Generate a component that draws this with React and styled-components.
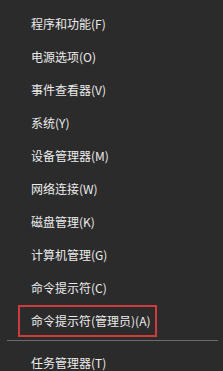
import React from "react";
import styled, { createGlobalStyle } from "styled-components";

const GlobalStyle = createGlobalStyle`
  html, body {
    margin: 0;
    padding: 0;
    background: #2b2b2b;
  }
`;

const Menu = styled.div`
  width: 223px;
  height: 371px;
  overflow: hidden;
  background: #2b2b2b;
  padding-top: 7px;
  box-sizing: border-box;
  font-family: "Microsoft YaHei", "Noto Sans CJK SC", "Liberation Sans", sans-serif;
  font-size: 12px;
  color: #ececec;
`;

const Item = styled.div`
  height: 33px;
  display: flex;
  align-items: center;
  padding-left: 18px;
`;

const Label = styled.span`
  display: flex;
  align-items: center;
  box-sizing: border-box;
  height: 32px;
  padding: 0 11px;
  border: 2px solid ${(p) => (p.$framed ? "#cf3b3d" : "transparent")};
  width: ${(p) => (p.$framed ? "139px" : "auto")};
  white-space: nowrap;
`;

const Separator = styled.div`
  height: 1px;
  margin: 3px 5px 5px 7px;
  background: #6c6c6c;
`;

const items = [
  "程序和功能(F)",
  "电源选项(O)",
  "事件查看器(V)",
  "系统(Y)",
  "设备管理器(M)",
  "网络连接(W)",
  "磁盘管理(K)",
  "计算机管理(G)",
  "命令提示符(C)",
];

export default function App() {
  return (
    <>
      <GlobalStyle />
      <Menu>
        {items.map((t) => (
          <Item key={t}>
            <Label>{t}</Label>
          </Item>
        ))}
        <Item>
          <Label $framed>命令提示符(管理员)(A)</Label>
        </Item>
        <Separator />
        <Item>
          <Label>任务管理器(T)</Label>
        </Item>
      </Menu>
    </>
  );
}
